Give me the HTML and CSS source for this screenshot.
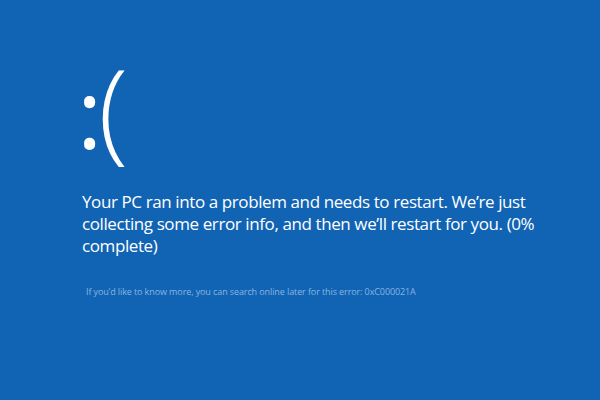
FILE: index.html
```html
<!DOCTYPE html>
<html lang="en">
<head>
<meta charset="UTF-8" />
<title>Your PC ran into a problem</title>
<link rel="stylesheet" href="styles.css">
</head>
<body>
<div class="bsod">
    <div class="face"><span class="eyes">:</span><span class="mouth">(</span></div>
    <p class="message">Your PC ran into a problem and needs to restart. We’re just collecting some error info, and then we’ll restart for you. (0% complete)</p>
    <p class="detail">If you’d like to know more, you can search online later for this error: 0xC000021A</p>
</div>
</body>
</html>
```

FILE: styles.css
```css
html, body {
    margin: 0;
    height: 100%;
}
body {
    background-color: #1164b4;
    color: #fff;
    font-family: "Open Sans", "Noto Sans", sans-serif;
}
.bsod {
    padding: 51px 40px 0 82px;
}
.face {
    font-size: 110px;
    line-height: 1;
    margin-left: -5px;
}
.eyes {
    font-size: 96px;
    font-weight: 400;
    letter-spacing: -4px;
}
.mouth {
    font-weight: 300;
}
.message {
    margin: 30px 0 0;
    font-size: 17px;
    line-height: 22px;
    letter-spacing: -0.4px;
    max-width: 470px;
}
.detail {
    margin: 28px 0 0 4px;
    font-size: 9px;
    letter-spacing: -0.1px;
    color: #8ab4e0;
}
```
